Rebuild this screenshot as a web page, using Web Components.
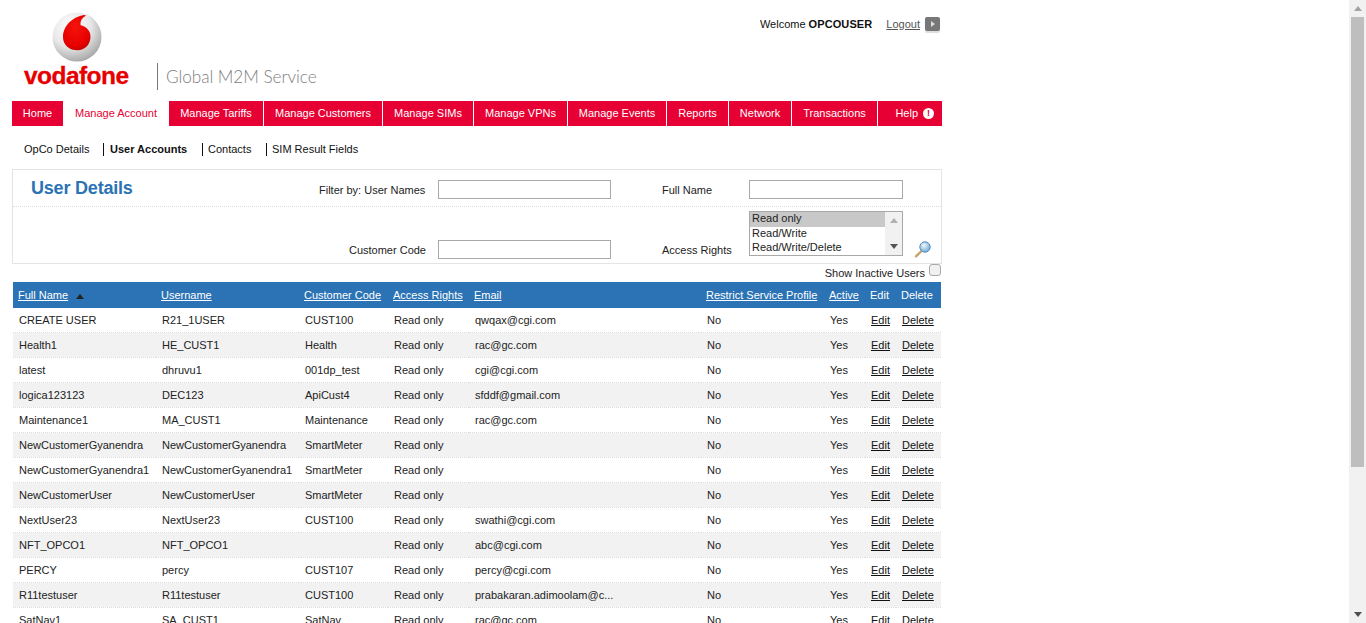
<!DOCTYPE html>
<html>
<head>
<meta charset="utf-8">
<title>User Details</title>
<style>
  html, body { margin: 0; height: 623px; overflow: hidden; background: #fff; }
  body { display: flex; font: 11px "Liberation Sans", Arial, sans-serif; color: #222; }
</style>
</head>
<body>
<vf-page>
  <vf-header></vf-header>
  <vf-nav></vf-nav>
  <vf-subnav></vf-subnav>
  <vf-filter></vf-filter>
  <vf-inactive></vf-inactive>
  <vf-users></vf-users>
</vf-page>
<vf-scrollbar></vf-scrollbar>

<script>
class VfPage extends HTMLElement {
  connectedCallback() {
    this.attachShadow({ mode: 'open' });
    this.shadowRoot.innerHTML = `
      <style>
        :host { display: block; flex: 1; height: 623px; overflow: hidden; padding-left: 12px; }
        .wrap { width: 930px; }
      </style>
      <div class="wrap"><slot></slot></div>
    `;
  }
}

class VfHeader extends HTMLElement {
  connectedCallback() {
    this.attachShadow({ mode: 'open' });
    this.shadowRoot.innerHTML = `
      <style>
        :host { display: flex; justify-content: space-between; height: 101px; }
        .brand { position: relative; width: 340px; }
        .ball { display: block; margin: 12px 0 0 40px; }
        .word {
          margin: 0 0 0 12px;
          font: bold 24.5px/28px "Liberation Sans", Arial, sans-serif;
          letter-spacing: -0.55px;
          -webkit-text-stroke: 0.3px #e60000;
          color: #e60000;
        }
        .tag {
          position: absolute; left: 145px; top: 63px;
          height: 27px; padding-left: 8px;
          border-left: 1px solid #777;
          font: 300 17.2px/28px Lato, "Open Sans", sans-serif;
          letter-spacing: -0.05px;
          color: #808080;
        }
        .user { display: flex; align-items: flex-start; padding: 17px 2px 0 0; line-height: 14px; color: #111; }
        .user b { margin-left: 3px; letter-spacing: 0.1px; }
        a { margin-left: 14px; color: #555; text-decoration: underline; }
        .go {
          width: 15px; height: 14px; margin-left: 5px; border-radius: 2px;
          background: #777; box-shadow: 0 2px 1px #ddd;
          display: flex; align-items: center; justify-content: center;
        }
      </style>
      <div class="brand">
        <svg class="ball" width="50" height="50" viewBox="0 0 50 50">
          <defs>
            <radialGradient id="silver" cx="0.38" cy="0.3" r="0.8">
              <stop offset="0" stop-color="#fff"/>
              <stop offset="0.5" stop-color="#e8e8e8"/>
              <stop offset="1" stop-color="#999"/>
            </radialGradient>
            <radialGradient id="redball" cx="0.45" cy="0.35" r="0.75">
              <stop offset="0" stop-color="#f5140a"/>
              <stop offset="0.7" stop-color="#e60000"/>
              <stop offset="1" stop-color="#b80000"/>
            </radialGradient>
          </defs>
          <circle cx="25" cy="25" r="24.5" fill="url(#silver)"/>
          <path d="M32 3C21 4.600 11 13.500 11 25c0 8.300 6.500 13.300 14.500 13.300C32.700 38.300 38.500 32.500 38.500 24.800c0-6.300-4.200-10.200-9.800-11.500-.1-.4-.2-.9-.2-1.400 0-4 2.800-7 5.500-8.100C33.400 3.300 32.700 3 32 3z" fill="url(#redball)"/>
        </svg>
        <div class="word">vodafone</div>
        <div class="tag">Global M2M Service</div>
      </div>
      <div class="user">
        <span>Welcome</span><b>OPCOUSER</b>
        <a href="#">Logout</a>
        <span class="go">
          <svg width="4" height="6" viewBox="0 0 4 6"><path d="M0 0l4 3-4 3z" fill="#ddd"/></svg>
        </span>
      </div>
    `;
  }
}

class VfNav extends HTMLElement {
  connectedCallback() {
    this.attachShadow({ mode: 'open' });
    const items = ['Home', 'Manage Account', 'Manage Tariffs', 'Manage Customers', 'Manage SIMs',
      'Manage VPNs', 'Manage Events', 'Reports', 'Network', 'Transactions'];
    this.shadowRoot.innerHTML = `
      <style>
        :host { display: flex; gap: 1px; height: 25px; }
        a {
          display: flex; align-items: center; justify-content: center; box-sizing: border-box;
          height: 25px; padding-bottom: 1px; background: #e60033; color: #fff; text-decoration: none;
        }
        a.on { background: #fff; color: #e60033; }
        .help { flex: 1; gap: 5px; padding: 0 8px 1px 9px; justify-content: flex-end; }
        .mark {
          width: 11px; height: 11px; border-radius: 50%; background: #fff; color: #e60033;
          font: bold 9px/11px "Liberation Sans", Arial, sans-serif; text-align: center;
        }
      </style>
      ${items.map((t, i) => `<a href="#" class="${i === 1 ? 'on' : ''}" style="width:${VfNav.widths[i]}px">${t}</a>`).join('')}
      <a href="#" class="help">Help <span class="mark">!</span></a>
    `;
  }
}
VfNav.widths = [51, 104, 94, 118, 90, 93, 98, 61, 62, 85];

class VfSubnav extends HTMLElement {
  connectedCallback() {
    this.attachShadow({ mode: 'open' });
    this.shadowRoot.innerHTML = `
      <style>
        :host { display: flex; align-items: center; height: 43px; padding-left: 12px; color: #111; }
        span { height: 13px; line-height: 13px; margin-top: 3px; }
        .sep { border-left: 1px solid #111; padding-left: 6px; }
        .tight { padding-left: 5px; }
      </style>
      <span style="width:79px">OpCo Details</span>
      <span class="sep" style="width:92px"><b>User Accounts</b></span>
      <span class="sep tight" style="width:58px">Contacts</span>
      <span class="sep tight">SIM Result Fields</span>
    `;
  }
}

class VfFilter extends HTMLElement {
  connectedCallback() {
    this.attachShadow({ mode: 'open' });
    this.shadowRoot.innerHTML = `
      <style>
        :host { display: block; border: 1px solid #e4e4e4; height: 93px; color: #222; }
        .row {
          display: grid; grid-template-columns: 306px 119px 173px 51px 87px 154px 1fr;
          box-sizing: border-box;
        }
        .r1 { height: 37px; border-bottom: 1px dotted #ddd; align-items: center; padding-top: 3px; }
        .r2 { height: 56px; align-items: end; padding-bottom: 4px; }
        h1 {
          margin: -3px 0 0 18px; font: bold 18px/22px "Liberation Sans", Arial, sans-serif;
          letter-spacing: -0.2px; color: #2b73b4;
        }
        label { text-align: right; padding-right: 12px; line-height: 14px; white-space: nowrap; }
        label.plain { text-align: left; padding: 0; }
        .r1 label:not(.plain) { padding-right: 13px; }
        .r2 label { padding-bottom: 2px; }
        input {
          box-sizing: border-box; height: 19px; width: 100%; margin: 0;
          border: 1px solid #a9a9a9; background: #fff; padding: 0 2px;
        }
        vf-listbox { align-self: start; margin-top: 4px; }
        .search { margin: 0 0 1px 11px; display: block; }
      </style>
      <div class="row r1">
        <h1 style="grid-column:1">User Details</h1>
        <label>Filter by: User Names</label>
        <input type="text">
        <span></span>
        <label class="plain">Full Name</label>
        <input type="text">
      </div>
      <div class="row r2">
        <span></span>
        <label>Customer Code</label>
        <input type="text">
        <span></span>
        <label class="plain">Access Rights</label>
        <vf-listbox></vf-listbox>
        <svg class="search" width="18" height="17" viewBox="0 0 18 17">
          <defs>
            <radialGradient id="glass" cx="0.4" cy="0.35" r="0.7">
              <stop offset="0" stop-color="#eef6fc"/>
              <stop offset="1" stop-color="#6ea6d4"/>
            </radialGradient>
          </defs>
          <path d="M7.500 10L2 15.300" stroke="#c9a26a" stroke-width="2.400" stroke-linecap="round"/>
          <circle cx="11" cy="6" r="5.200" fill="url(#glass)" stroke="#4f8dbf" stroke-width="1"/>
        </svg>
      </div>
    `;
  }
}

class VfListbox extends HTMLElement {
  connectedCallback() {
    this.attachShadow({ mode: 'open' });
    this.shadowRoot.innerHTML = `
      <style>
        :host { display: flex; box-sizing: border-box; height: 45px; border: 1px solid #a9a9a9; color: #222; }
        .opts { flex: 1; min-width: 0; }
        .opts div { height: 14px; line-height: 12px; padding-left: 2px; }
        .opts .sel { height: 15px; background: #c8c8c8; }
        .bar {
          width: 17px; background: #f1f1f1;
          display: flex; flex-direction: column; justify-content: space-between; align-items: center;
          padding: 6px 0 6px; box-sizing: border-box;
        }
      </style>
      <div class="opts">
        <div class="sel">Read only</div>
        <div>Read/Write</div>
        <div>Read/Write/Delete</div>
      </div>
      <div class="bar">
        <svg width="8" height="5" viewBox="0 0 8 5"><path d="M4 0l4 5H0z" fill="#b0b0b0"/></svg>
        <svg width="8" height="5" viewBox="0 0 8 5"><path d="M0 0h8L4 5z" fill="#555"/></svg>
      </div>
    `;
  }
}

class VfInactive extends HTMLElement {
  connectedCallback() {
    this.attachShadow({ mode: 'open' });
    this.shadowRoot.innerHTML = `
      <style>
        :host { display: flex; justify-content: flex-end; align-items: flex-start; gap: 4px; height: 18px; padding-right: 1px; color: #222; }
        span { line-height: 14px; margin-top: 2px; }
        input {
          appearance: none; box-sizing: border-box; width: 12px; height: 12px; margin: 0;
          border: 1px solid #a9a9a9; border-radius: 3px; background: #f0f0f0;
        }
      </style>
      <span>Show Inactive Users</span>
      <input type="checkbox">
    `;
  }
}

class VfUsers extends HTMLElement {
  connectedCallback() {
    this.attachShadow({ mode: 'open' });
    const rows = [
      ['CREATE USER', 'R21_1USER', 'CUST100', 'qwqax@cgi.com'],
      ['Health1', 'HE_CUST1', 'Health', 'rac@gc.com'],
      ['latest', 'dhruvu1', '001dp_test', 'cgi@cgi.com'],
      ['logica123123', 'DEC123', 'ApiCust4', 'sfddf@gmail.com'],
      ['Maintenance1', 'MA_CUST1', 'Maintenance', 'rac@gc.com'],
      ['NewCustomerGyanendra', 'NewCustomerGyanendra', 'SmartMeter', ''],
      ['NewCustomerGyanendra1', 'NewCustomerGyanendra1', 'SmartMeter', ''],
      ['NewCustomerUser', 'NewCustomerUser', 'SmartMeter', ''],
      ['NextUser23', 'NextUser23', 'CUST100', 'swathi@cgi.com'],
      ['NFT_OPCO1', 'NFT_OPCO1', '', 'abc@cgi.com'],
      ['PERCY', 'percy', 'CUST107', 'percy@cgi.com'],
      ['R11testuser', 'R11testuser', 'CUST100', 'prabakaran.adimoolam@c...'],
      ['SatNav1', 'SA_CUST1', 'SatNav', 'rac@gc.com'],
    ];
    const widths = [143, 143, 89, 81, 232, 123, 41, 31, 45];
    this.shadowRoot.innerHTML = `
      <style>
        :host { display: block; margin-left: 1px; width: 929px; color: #222; }
        table { border-collapse: collapse; table-layout: fixed; width: 928px; }
        th {
          height: 26px; padding: 0 0 0 5px; background: #2b73b4; color: #fff;
          font-weight: normal; text-align: left;
        }
        th a { color: #fff; }
        th .arrow { display: inline-block; margin: 0 0 0 8px; vertical-align: 0; }
        td { height: 24px; padding: 0 0 0 6px; border-bottom: 1px dotted #ddd; white-space: nowrap; overflow: hidden; }
        tr:nth-child(even) td { background: #f2f2f2; }
        td a { color: #111; }
      </style>
      <table>
        <colgroup>${widths.map(w => `<col style="width:${w}px">`).join('')}</colgroup>
        <thead>
          <tr>
            <th><a href="#">Full Name</a><svg class="arrow" width="8" height="5" viewBox="0 0 8 5"><path d="M4 0l4 5H0z" fill="#222"/></svg></th>
            <th><a href="#">Username</a></th>
            <th><a href="#">Customer Code</a></th>
            <th><a href="#">Access Rights</a></th>
            <th><a href="#">Email</a></th>
            <th><a href="#">Restrict Service Profile</a></th>
            <th><a href="#">Active</a></th>
            <th>Edit</th>
            <th>Delete</th>
          </tr>
        </thead>
        <tbody>
          ${rows.map(r => `
            <tr>
              <td>${r[0]}</td><td>${r[1]}</td><td>${r[2]}</td><td>Read only</td><td>${r[3]}</td>
              <td>No</td><td>Yes</td><td><a href="#">Edit</a></td><td><a href="#">Delete</a></td>
            </tr>`).join('')}
        </tbody>
      </table>
    `;
  }
}

class VfScrollbar extends HTMLElement {
  connectedCallback() {
    this.attachShadow({ mode: 'open' });
    this.shadowRoot.innerHTML = `
      <style>
        :host {
          display: flex; flex-direction: column; align-items: center; box-sizing: border-box;
          width: 17px; height: 623px; background: #f1f1f1;
        }
        .btn { height: 17px; display: flex; align-items: center; justify-content: center; flex: none; }
        .thumb { width: 13px; height: 450px; flex: none; background: #bebebe; }
        .track { flex: 1; }
      </style>
      <div class="btn"><svg width="8" height="5" viewBox="0 0 8 5"><path d="M4 0l4 5H0z" fill="#a3a3a3"/></svg></div>
      <div class="thumb"></div>
      <div class="track"></div>
      <div class="btn"><svg width="8" height="5" viewBox="0 0 8 5"><path d="M0 0h8L4 5z" fill="#505050"/></svg></div>
    `;
  }
}

customElements.define('vf-page', VfPage);
customElements.define('vf-header', VfHeader);
customElements.define('vf-nav', VfNav);
customElements.define('vf-subnav', VfSubnav);
customElements.define('vf-listbox', VfListbox);
customElements.define('vf-filter', VfFilter);
customElements.define('vf-inactive', VfInactive);
customElements.define('vf-users', VfUsers);
customElements.define('vf-scrollbar', VfScrollbar);
</script>
</body>
</html>
